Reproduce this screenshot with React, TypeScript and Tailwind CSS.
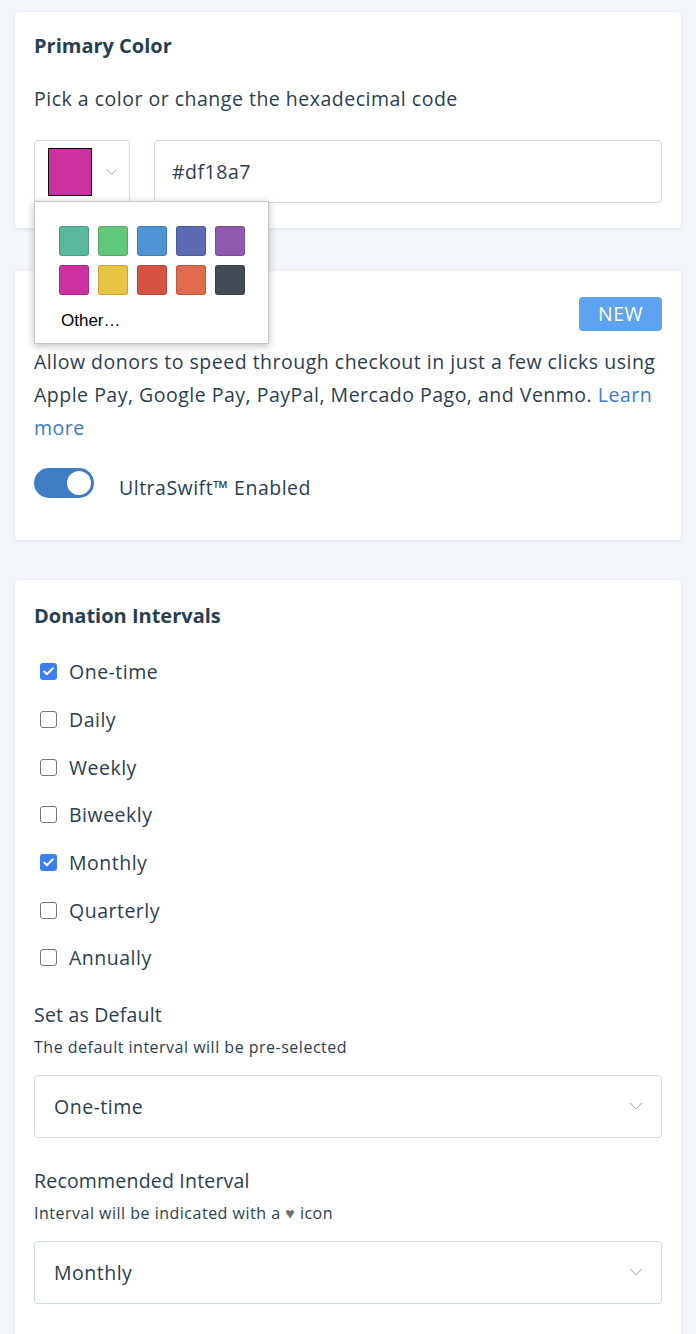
import { ChevronDown, Check } from 'lucide-react';

const SWATCHES = [
  '#58b99d', '#63c97a', '#4f95d5', '#5d6bb3', '#8f5aad',
  '#cc30a2', '#eac443', '#d45343', '#e06b4e', '#434b57',
];

const INTERVALS: { label: string; checked: boolean }[] = [
  { label: 'One-time', checked: true },
  { label: 'Daily', checked: false },
  { label: 'Weekly', checked: false },
  { label: 'Biweekly', checked: false },
  { label: 'Monthly', checked: true },
  { label: 'Quarterly', checked: false },
  { label: 'Annually', checked: false },
];

function Card({ children, className = '' }: { children: React.ReactNode; className?: string }) {
  return (
    <div className={`bg-white rounded-[4px] shadow-[0_1px_4px_rgba(40,70,110,0.12)] mx-[15px] ${className}`}>
      {children}
    </div>
  );
}

function SelectBox({ value }: { value: string }) {
  return (
    <div className="h-[63px] border border-[#cfdbe5] rounded-[4px] flex items-center justify-between pl-[19px] pr-[14px]">
      <span className="text-[19.5px] tracking-[0.5px]">{value}</span>
      <ChevronDown size={22} strokeWidth={1} className="text-[#8a96a3]" />
    </div>
  );
}

export default function App() {
  return (
    <div
      className="min-h-screen bg-[#f3f6fa] pt-[12px] pb-10 text-[#2b3e51]"
      style={{ fontFamily: '"Open Sans", "Noto Sans", sans-serif' }}
    >
      {/* Primary color */}
      <Card className="relative px-[19px] pt-[22px] pb-[25px]">
        <h2 className="text-[20px] font-bold leading-[24px]">Primary Color</h2>
        <p className="text-[19.5px] tracking-[0.5px] mt-[29px] leading-[24px]">Pick a color or change the hexadecimal code</p>
        <div className="flex gap-[24px] mt-[29px]">
          <div className="w-[96px] h-[63px] border border-[#cfdbe5] rounded-[4px] flex items-center pl-[13px] pr-[8px] gap-[10px] shrink-0">
            <div className="w-[46px] h-[48px] bg-[#cc30a2] border border-black" />
            <ChevronDown size={20} strokeWidth={1} className="text-[#8a96a3]" />
          </div>
          <div className="flex-1 h-[63px] border border-[#cfdbe5] rounded-[4px] flex items-center px-[17px]">
            <span className="text-[19.5px] tracking-[0.5px]">#df18a7</span>
          </div>
        </div>

        {/* Color popup */}
        <div className="absolute left-[19px] top-[189px] w-[235px] bg-white border border-[#c8c8c8] shadow-[0_2px_8px_rgba(0,0,0,0.25)] z-10 pt-[24px] pb-[12px] pl-[24px]">
          <div className="grid grid-cols-5 gap-[9px] w-[186px]">
            {SWATCHES.map((c) => (
              <div
                key={c}
                className="w-[30px] h-[30px] rounded-[3px] border border-black/15"
                style={{ backgroundColor: c }}
              />
            ))}
          </div>
          <div
            className="mt-[16px] ml-[2px] text-[17px] text-black leading-[20px]"
            style={{ fontFamily: '"Liberation Sans", Arial, sans-serif' }}
          >
            Other…
          </div>
        </div>
      </Card>

      {/* UltraSwift */}
      <Card className="mt-[43px] px-[19px] pt-[26px] pb-[38px]">
        <div className="flex items-center justify-between">
          <h2 className="text-[20px] font-bold">UltraSwift™ Checkout</h2>
          <span className="bg-[#5ea3f0] text-white text-[19.5px] tracking-[0.5px] leading-[34px] px-[19px] rounded-[4px]">NEW</span>
        </div>
        <p className="text-[19.5px] tracking-[0.5px] leading-[33px] mt-[14px]">
          Allow donors to speed through checkout in just a few clicks using Apple Pay, Google Pay, PayPal, Mercado Pago, and Venmo.{' '}
          <span className="text-[#3d7cc9]">Learn more</span>
        </p>
        <div className="flex items-start gap-[25px] mt-[24px]">
          <div className="w-[60px] h-[30px] rounded-full bg-[#3e7cc4] flex items-center justify-end pr-[3px] shrink-0">
            <div className="w-[24px] h-[24px] rounded-full bg-white" />
          </div>
          <span className="text-[19.5px] tracking-[0.5px] leading-[29px] mt-[5px]">UltraSwift™ Enabled</span>
        </div>
      </Card>

      {/* Donation intervals */}
      <Card className="mt-[40px] px-[19px] pt-[24px] pb-[40px]">
        <h2 className="text-[20px] font-bold leading-[24px]">Donation Intervals</h2>
        <div className="mt-[20px] flex flex-col">
          {INTERVALS.map(({ label, checked }) => (
            <div key={label} className="flex items-center h-[47.7px] pl-[6px] gap-[12px]">
              {checked ? (
                <div className="w-[17px] h-[17px] rounded-[3px] bg-[#3b7ff2] flex items-center justify-center">
                  <Check size={13} strokeWidth={3.5} className="text-white" />
                </div>
              ) : (
                <div className="w-[17px] h-[17px] rounded-[3px] border-[1.5px] border-[#767676] bg-white" />
              )}
              <span className="text-[19.5px] tracking-[0.5px]">{label}</span>
            </div>
          ))}
        </div>

        <div className="mt-[21px]">
          <div className="text-[19.5px] tracking-[0.2px] leading-[24px]">Set as Default</div>
          <div className="text-[16px] tracking-[0.5px] leading-[20px] mt-[10px]">The default interval will be pre-selected</div>
          <div className="mt-[18px]">
            <SelectBox value="One-time" />
          </div>
        </div>

        <div className="mt-[31px]">
          <div className="text-[19.5px] tracking-[0.2px] leading-[24px]">Recommended Interval</div>
          <div className="text-[16px] tracking-[0.5px] leading-[20px] mt-[10px]">
            Interval will be indicated with a <span className="text-[#6f6f6f]">♥</span> icon
          </div>
          <div className="mt-[18px]">
            <SelectBox value="Monthly" />
          </div>
        </div>
      </Card>
    </div>
  );
}
